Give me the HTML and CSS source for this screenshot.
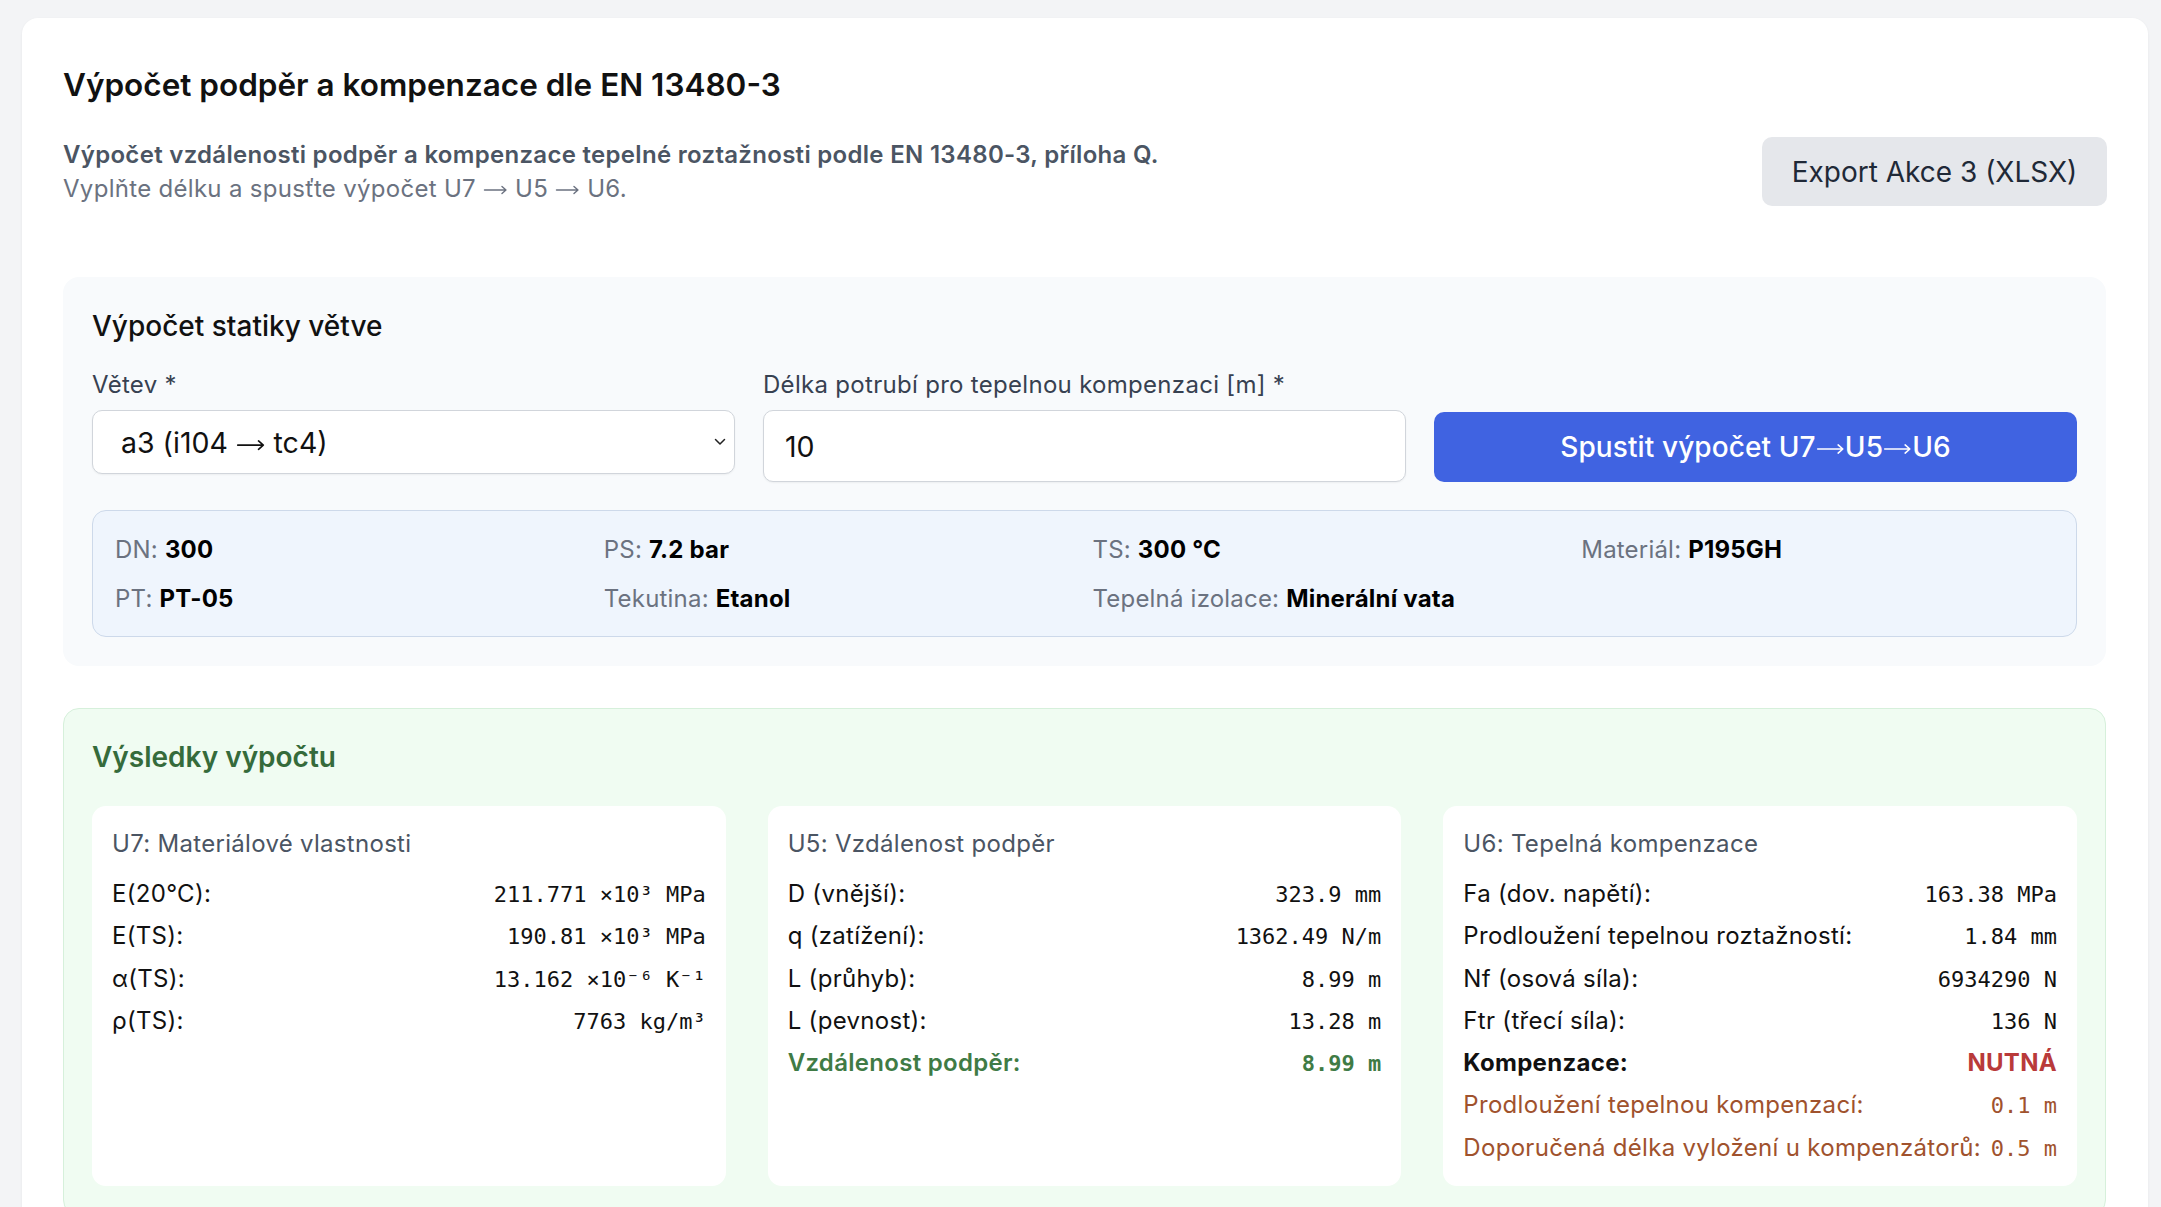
FILE: index.html
```html
<!DOCTYPE html>
<html lang="cs">
<head>
    <meta charset="UTF-8">
    <meta name="viewport" content="width=device-width, initial-scale=1.0">
    <title>Výpočet podpěr a kompenzace</title>
    <link rel="stylesheet" href="styles.css">
</head>
<body>
    <div class="page">
        <div class="card">
            <h1 class="page-title">Výpočet podpěr a kompenzace dle EN 13480-3</h1>

            <div class="intro">
                <div class="intro-text">
                    <p class="intro-lead">Výpočet vzdálenosti podpěr a kompenzace tepelné roztažnosti podle EN 13480-3, příloha Q.</p>
                    <p class="intro-hint">Vyplňte délku a spusťte výpočet U7
                        <svg class="arrow" viewBox="0 0 24 12"><path d="M1 6H22.5M18.5 2.5L22.5 6L18.5 9.5"/></svg>
                        U5
                        <svg class="arrow" viewBox="0 0 24 12"><path d="M1 6H22.5M18.5 2.5L22.5 6L18.5 9.5"/></svg>
                        U6.</p>
                </div>
                <button class="btn-export">Export Akce 3 (XLSX)</button>
            </div>

            <!-- Input form -->
            <section class="panel">
                <h3 class="panel-title">Výpočet statiky větve</h3>
                <div class="form-row">
                    <div class="field">
                        <label>Větev *</label>
                        <div class="select-box" tabindex="0">
                            <span>a3 (i104 <svg class="arrow" viewBox="0 0 24 12"><path d="M1 6H22.5M18.5 2.5L22.5 6L18.5 9.5"/></svg> tc4)</span>
                            <svg class="chevron" width="12" height="8" viewBox="0 0 12 8">
                                <path d="M1.5 1.5 L6 6 L10.5 1.5" fill="none" stroke="#222" stroke-width="1.5" stroke-linecap="round" stroke-linejoin="round"/>
                            </svg>
                        </div>
                    </div>
                    <div class="field">
                        <label for="length">Délka potrubí pro tepelnou kompenzaci [m] *</label>
                        <input type="text" id="length" value="10">
                    </div>
                    <button class="btn-run">Spustit výpočet U7<svg class="arrow" viewBox="0 0 24 12"><path d="M1 6H22.5M18.5 2.5L22.5 6L18.5 9.5"/></svg>U5<svg class="arrow" viewBox="0 0 24 12"><path d="M1 6H22.5M18.5 2.5L22.5 6L18.5 9.5"/></svg>U6</button>
                </div>

                <div class="branch-info">
                    <div><span class="info-label">DN:</span> <b>300</b></div>
                    <div><span class="info-label">PS:</span> <b>7.2 bar</b></div>
                    <div><span class="info-label">TS:</span> <b>300 °C</b></div>
                    <div><span class="info-label">Materiál:</span> <b>P195GH</b></div>
                    <div><span class="info-label">PT:</span> <b>PT-05</b></div>
                    <div><span class="info-label">Tekutina:</span> <b>Etanol</b></div>
                    <div><span class="info-label">Tepelná izolace:</span> <b>Minerální vata</b></div>
                </div>
            </section>

            <!-- Results -->
            <section class="results">
                <h3 class="results-title">Výsledky výpočtu</h3>
                <div class="results-grid">
                    <div class="result-card">
                        <h4>U7: Materiálové vlastnosti</h4>
                        <div class="row"><span>E(20°C):</span><span class="val">211.771 ×10³ MPa</span></div>
                        <div class="row"><span>E(TS):</span><span class="val">190.81 ×10³ MPa</span></div>
                        <div class="row"><span>α(TS):</span><span class="val">13.162 ×10⁻⁶ K⁻¹</span></div>
                        <div class="row"><span>ρ(TS):</span><span class="val">7763 kg/m³</span></div>
                    </div>
                    <div class="result-card">
                        <h4>U5: Vzdálenost podpěr</h4>
                        <div class="row"><span>D (vnější):</span><span class="val">323.9 mm</span></div>
                        <div class="row"><span>q (zatížení):</span><span class="val">1362.49 N/m</span></div>
                        <div class="row"><span>L (průhyb):</span><span class="val">8.99 m</span></div>
                        <div class="row"><span>L (pevnost):</span><span class="val">13.28 m</span></div>
                        <div class="row row-ok"><span>Vzdálenost podpěr:</span><span class="val">8.99 m</span></div>
                    </div>
                    <div class="result-card">
                        <h4>U6: Tepelná kompenzace</h4>
                        <div class="row"><span>Fa (dov. napětí):</span><span class="val">163.38 MPa</span></div>
                        <div class="row"><span>Prodloužení tepelnou roztažností:</span><span class="val">1.84 mm</span></div>
                        <div class="row"><span>Nf (osová síla):</span><span class="val">6934290 N</span></div>
                        <div class="row"><span>Ftr (třecí síla):</span><span class="val">136 N</span></div>
                        <div class="row row-strong"><span>Kompenzace:</span><span class="status-bad">NUTNÁ</span></div>
                        <div class="row row-warn"><span>Prodloužení tepelnou kompenzací:</span><span class="val">0.1 m</span></div>
                        <div class="row row-warn"><span>Doporučená délka vyložení u kompenzátorů:</span><span class="val">0.5 m</span></div>
                    </div>
                </div>
            </section>
        </div>
    </div>
</body>
</html>
```

FILE: styles.css
```css
* {
    margin: 0;
    padding: 0;
    box-sizing: border-box;
}

body {
    font-family: Inter, "Noto Sans", Arial, sans-serif;
    background-color: #f3f4f6;
    color: #111827;
    letter-spacing: 0.3px;
}

/* thin arrow between the steps, sized to the text */
.arrow {
    display: inline-block;
    width: 1.04em;
    height: 0.5em;
    vertical-align: 0.02em;
    fill: none;
    stroke: currentColor;
    stroke-width: 1.4;
    stroke-linecap: round;
    stroke-linejoin: round;
}

.page {
    padding: 18px 13px 0 22px;
}

.card {
    background-color: #fff;
    border-radius: 16px;
    box-shadow: 0 1px 3px rgba(0, 0, 0, 0.06);
    padding: 47px 42px 40px 41px;
}

.page-title {
    font-size: 31.5px;
    line-height: 40px;
    font-weight: 600;
    letter-spacing: 0;
    color: #111;
    margin-bottom: 32px;
}

.intro {
    display: flex;
    justify-content: space-between;
    align-items: center;
}

.intro-text {
    font-size: 24px;
    line-height: 34px;
}

.intro-lead {
    font-weight: 600;
    color: #4b5563;
}

.intro-hint {
    color: #6b7280;
}

.btn-export {
    font-family: inherit;
    font-size: 28px;
    letter-spacing: 0;
    color: #1f2937;
    background-color: #e5e7eb;
    border: none;
    border-radius: 10px;
    width: 345px;
    height: 69px;
    margin-right: -1px;
    cursor: pointer;
}

/* Input form */
.panel {
    margin-top: 71px;
    background-color: #f8fafc;
    border-radius: 16px;
    padding: 32px 29px 29px;
}

.panel-title {
    font-size: 28px;
    line-height: 34px;
    font-weight: 500;
    letter-spacing: 0;
    color: #111;
    margin-bottom: 25px;
}

.form-row {
    display: grid;
    grid-template-columns: 1fr 1fr 1fr;
    gap: 28px;
    align-items: start;
}

.field label {
    display: block;
    font-size: 24px;
    line-height: 34px;
    color: #374151;
    margin-bottom: 8px;
}

.select-box,
.field input {
    width: 100%;
    font-family: inherit;
    font-size: 28.5px;
    letter-spacing: 0;
    color: #111;
    background-color: #fff;
    border: 1px solid #d1d5db;
    border-radius: 10px;
    box-shadow: 0 1px 2px rgba(0, 0, 0, 0.05);
}

.select-box {
    height: 64px;
    padding: 0 8px 0 28px;
    display: flex;
    align-items: center;
    justify-content: space-between;
    cursor: pointer;
}

.field input {
    height: 72px;
    padding: 0 21px;
}

.btn-run {
    align-self: end;
    height: 70px;
    font-family: inherit;
    font-size: 28px;
    font-weight: 500;
    letter-spacing: 0.1px;
    color: #fff;
    background-color: #4063e1;
    border: none;
    border-radius: 10px;
    cursor: pointer;
}

.branch-info {
    margin-top: 28px;
    display: grid;
    grid-template-columns: repeat(4, 1fr);
    column-gap: 16px;
    row-gap: 13px;
    padding: 21px 22px 19px;
    font-size: 24px;
    line-height: 36px;
    letter-spacing: 0.2px;
    background-color: #eff5fd;
    border: 1px solid #cdd9ea;
    border-radius: 14px;
}

.info-label {
    color: #6b7280;
}

.branch-info b {
    font-weight: 700;
    color: #000;
}

/* Results */
.results {
    margin-top: 42px;
    background-color: #f0fcf2;
    border: 1px solid #d6f0db;
    border-radius: 16px;
    padding: 31px 28px 29px;
}

.results-title {
    font-size: 28px;
    line-height: 34px;
    font-weight: 600;
    letter-spacing: 0;
    color: #356b3b;
    margin-bottom: 32px;
}

.results-grid {
    display: grid;
    grid-template-columns: repeat(3, 1fr);
    gap: 42px;
}

.result-card {
    background-color: #fff;
    border-radius: 14px;
    padding: 21px 20px 17px;
}

.result-card h4 {
    font-size: 24px;
    line-height: 34px;
    font-weight: 400;
    color: #4b5563;
    margin-bottom: 12px;
}

.row {
    display: flex;
    justify-content: space-between;
    align-items: baseline;
    padding: 4px 0;
    font-size: 24px;
    line-height: 34.25px;
    color: #111;
}

.val {
    font-family: "DejaVu Sans Mono", "Liberation Mono", monospace;
    font-size: 22px;
    line-height: 1;
    letter-spacing: 0;
    white-space: pre;
}

.row-ok {
    font-weight: 600;
    color: #3f7b45;
}

.row-strong {
    font-weight: 700;
}

.status-bad {
    font-weight: 700;
    color: #b93a3a;
}

.row-warn {
    color: #a0522d;
}
```
